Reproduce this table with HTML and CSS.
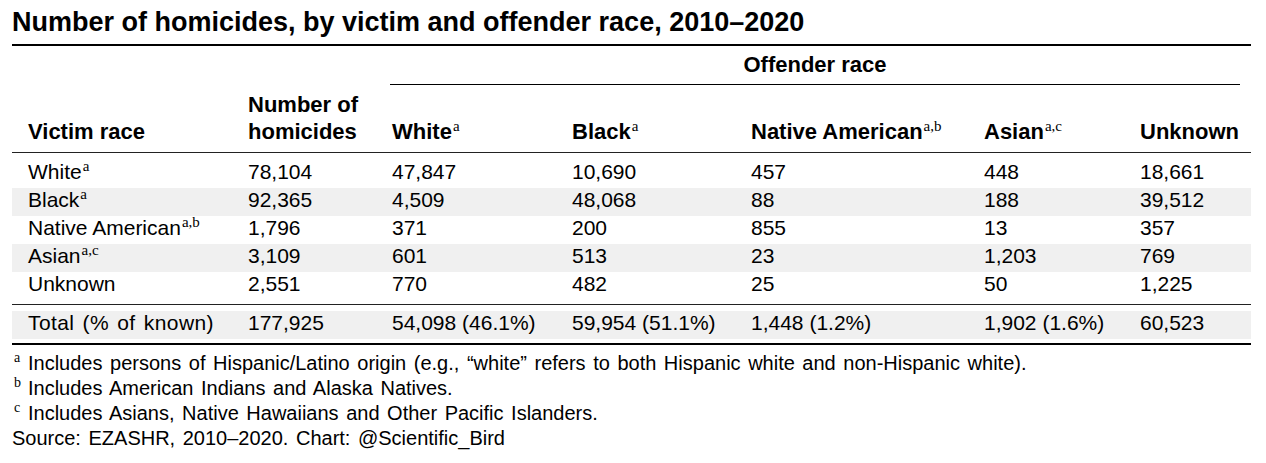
FILE: index.html
```html
<!DOCTYPE html>
<html lang="en">
<head>
<meta charset="utf-8">
<title>Number of homicides, by victim and offender race, 2010–2020</title>
<link rel="stylesheet" href="styles.css">
</head>
<body>
<div class="page">
  <h1 class="title">Number of homicides, by victim and offender race, 2010–2020</h1>
  <table class="tbl">
    <colgroup>
      <col class="c1"><col class="c2"><col class="c3"><col class="c4"><col class="c5"><col class="c6"><col class="c7">
    </colgroup>
    <thead>
      <tr class="hrow1">
        <th></th>
        <th></th>
        <th colspan="5" class="group"><div class="cmid">Offender race</div></th>
      </tr>
      <tr class="hrow2">
        <th>Victim race</th>
        <th>Number of<br>homicides</th>
        <th>White<span class="sup">a</span></th>
        <th>Black<span class="sup">a</span></th>
        <th>Native American<span class="sup">a,b</span></th>
        <th>Asian<span class="sup">a,c</span></th>
        <th>Unknown</th>
      </tr>
    </thead>
    <tbody>
      <tr class="first">
        <td>White<span class="sup">a</span></td><td>78,104</td><td>47,847</td><td>10,690</td><td>457</td><td>448</td><td>18,661</td>
      </tr>
      <tr class="shade">
        <td>Black<span class="sup">a</span></td><td>92,365</td><td>4,509</td><td>48,068</td><td>88</td><td>188</td><td>39,512</td>
      </tr>
      <tr>
        <td>Native American<span class="sup">a,b</span></td><td>1,796</td><td>371</td><td>200</td><td>855</td><td>13</td><td>357</td>
      </tr>
      <tr class="shade">
        <td>Asian<span class="sup">a,c</span></td><td>3,109</td><td>601</td><td>513</td><td>23</td><td>1,203</td><td>769</td>
      </tr>
      <tr class="last">
        <td>Unknown</td><td>2,551</td><td>770</td><td>482</td><td>25</td><td>50</td><td>1,225</td>
      </tr>
      <tr class="total">
        <td class="wide">Total (% of known)</td><td>177,925</td><td>54,098 (46.1%)</td><td>59,954 (51.1%)</td><td>1,448 (1.2%)</td><td>1,902 (1.6%)</td><td>60,523</td>
      </tr>
    </tbody>
  </table>
  <div class="notes">
    <p class="note"><span class="fn">a</span>Includes persons of Hispanic/Latino origin (e.g., “white” refers to both Hispanic white and non-Hispanic white).</p>
    <p class="note"><span class="fn">b</span>Includes American Indians and Alaska Natives.</p>
    <p class="note"><span class="fn">c</span>Includes Asians, Native Hawaiians and Other Pacific Islanders.</p>
    <p class="note src">Source: EZASHR, 2010–2020. Chart: @Scientific_Bird</p>
  </div>
</div>
</body>
</html>
```
FILE: styles.css
```css
html, body {
  margin: 0;
  padding: 0;
  background: #fff;
}

body {
  font-family: "Liberation Sans", Arial, sans-serif;
  color: #000;
}

.page {
  width: 1239px;
  margin-left: 12px;
}

.title {
  margin: 0;
  padding: 6px 0 6px 0;
  font-size: 27px;
  line-height: 32px;
  font-weight: bold;
  border-bottom: 2px solid #000;
}

.tbl {
  width: 1239px;
  table-layout: fixed;
  border-collapse: separate;
  border-spacing: 0;
  border-bottom: 2px solid #000;
}

.c1 { width: 220px; }
.c2 { width: 144px; }
.c3 { width: 180px; }
.c4 { width: 179px; }
.c5 { width: 233px; }
.c6 { width: 156px; }
.c7 { width: 127px; }

th {
  font-size: 22px;
  line-height: 27px;
  font-weight: bold;
  text-align: left;
  white-space: nowrap;
}

.hrow1 th {
  padding: 5px 0 0 0;
}

.hrow1 th.group {
  padding: 5px 11px 0 14px;
}

.cmid {
  text-align: center;
  padding-bottom: 6px;
  border-bottom: 1px solid #000;
}

.hrow2 th {
  padding: 6px 0 7px 16px;
  vertical-align: bottom;
  border-bottom: 1px solid #222;
}

td {
  font-size: 21px;
  line-height: 24px;
  padding: 0 0 4px 16px;
  white-space: nowrap;
  vertical-align: top;
}

td.wide {
  letter-spacing: 0.4px;
  word-spacing: 2px;
}

tr.first td {
  padding-top: 7px;
}

tr.shade td {
  background: #f0f0f0;
}

tr.last td {
  padding-bottom: 8px;
  border-bottom: 1px solid #222;
}

tr.total td {
  background: #f0f0f0;
  border-top: 6px solid #fff;
  border-bottom: 4px solid #fff;
}

.sup {
  font-family: "Liberation Serif", "Times New Roman", serif;
  font-weight: normal;
  font-size: 15px;
  line-height: 0;
  vertical-align: 8px;
  margin-left: 1px;
  letter-spacing: 0;
}

.notes {
  padding-top: 6px;
}

.note {
  margin: 0;
  font-size: 20px;
  line-height: 25px;
  word-spacing: 2px;
  white-space: nowrap;
}

.fn {
  display: inline-block;
  width: 16px;
  padding-left: 2px;
  box-sizing: border-box;
  font-family: "Liberation Serif", "Times New Roman", serif;
  font-size: 14px;
  line-height: 0;
  vertical-align: 8px;
  word-spacing: 0;
}
```
